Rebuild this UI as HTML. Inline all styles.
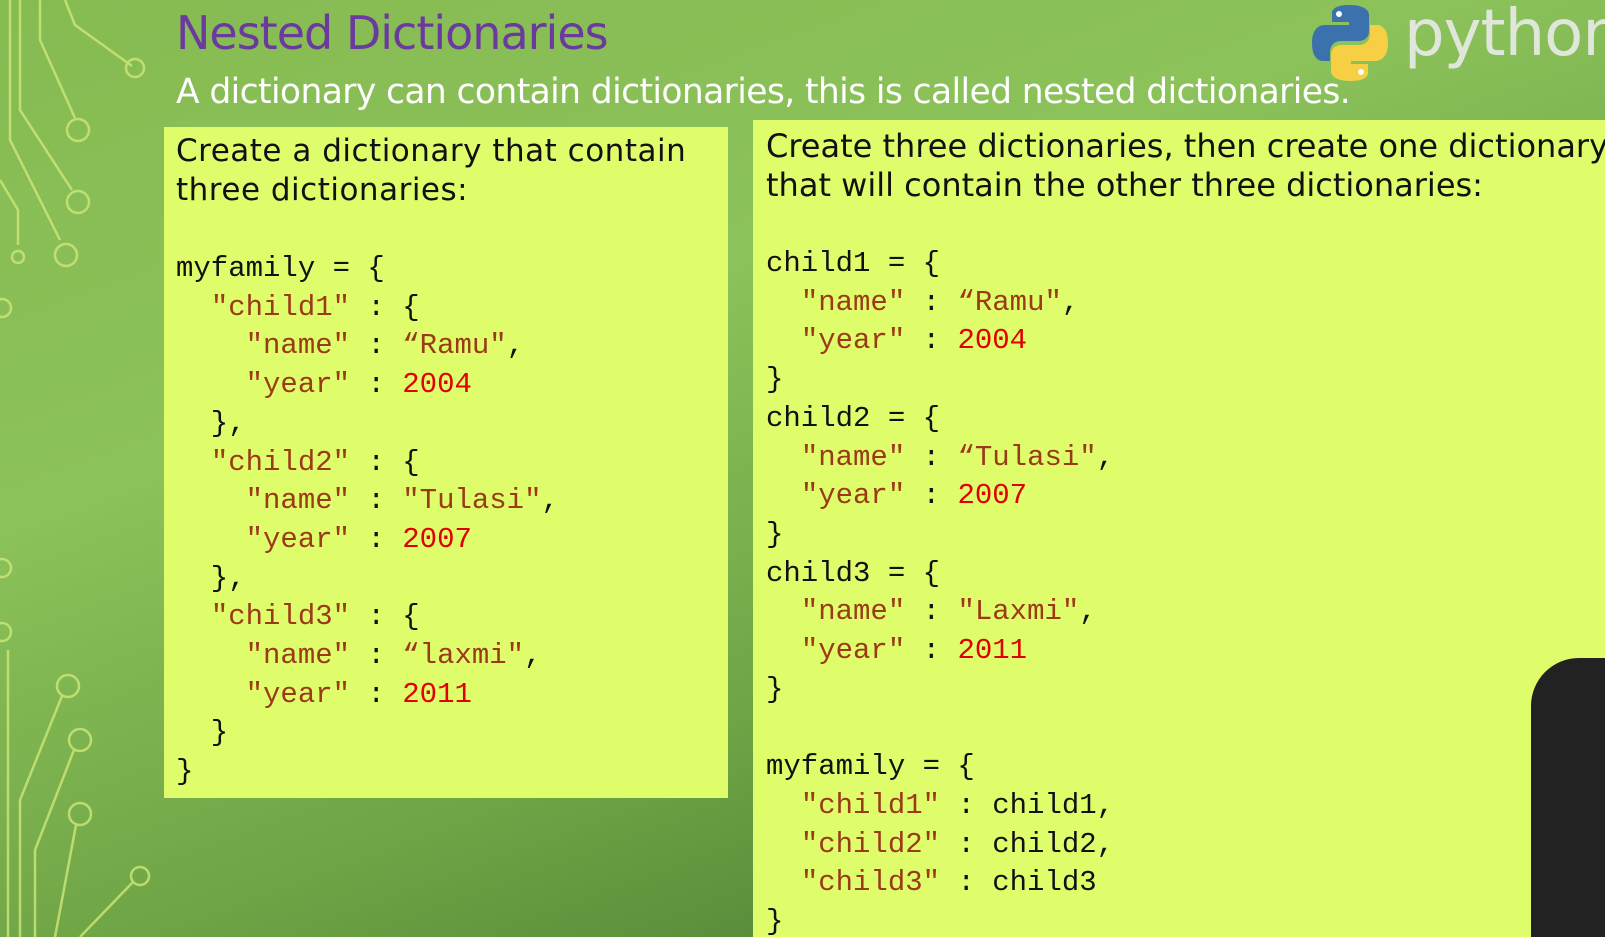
<!DOCTYPE html>
<html><head><meta charset="utf-8"><style>
html,body{margin:0;padding:0;width:1605px;height:937px;overflow:hidden;background:#5f9538}
body{position:relative;
background:linear-gradient(160deg,#86bb52 0%,#8cc25a 35%,#6ea445 65%,#3f6f2c 100%);
font-family:"Liberation Sans",sans-serif}
.t{position:absolute;white-space:pre;line-height:1}
.title{left:176px;top:10px;font-size:46px;color:#6b3a9e;font-family:"DejaVu Sans","Liberation Sans",sans-serif;letter-spacing:-1px}
.sub{left:176px;top:75px;font-size:34.5px;color:#fff;font-family:"DejaVu Sans","Liberation Sans",sans-serif;letter-spacing:-0.6px}
.panel{position:absolute;background:#dffc6a}
.code{position:absolute;font-family:"Liberation Mono",monospace;font-size:29px;line-height:38.7px;white-space:pre;color:#111}
.hd{position:absolute;font-size:31px;line-height:39px;white-space:pre;color:#111;font-family:"DejaVu Sans",sans-serif}
.s{color:#9a3a16}.n{color:#e00000}
</style></head><body>
<svg width="170" height="937" style="position:absolute;left:0;top:0" fill="none" stroke="#cfe878" stroke-width="2.5" opacity=".8">
<path d="M65 0 L75 25 L132 66"/><circle cx="135" cy="68" r="9"/>
<path d="M40 0 L40 40 L75 118"/><circle cx="78" cy="130" r="11"/>
<path d="M20 0 L20 110 L72 190"/><circle cx="78" cy="202" r="11"/>
<path d="M10 0 L10 140 L60 240"/><circle cx="66" cy="255" r="11"/>
<path d="M0 180 L18 210 L18 245"/><circle cx="18" cy="257" r="6"/>
<circle cx="2" cy="308" r="9"/>
<circle cx="2" cy="568" r="9"/><circle cx="2" cy="632" r="9"/>
<circle cx="68" cy="686" r="11"/><path d="M62 696 L20 800 L20 937"/>
<circle cx="80" cy="740" r="11"/><path d="M74 750 L35 850 L35 937"/>
<circle cx="80" cy="814" r="11"/><path d="M76 825 L55 937"/>
<circle cx="140" cy="876" r="9"/><path d="M133 882 L80 937"/>
<path d="M8 650 L8 937"/>
</svg>
<div class="t title">Nested Dictionaries</div>
<div class="t sub">A dictionary can contain dictionaries, this is called nested dictionaries.</div>
<svg width="80" height="80" viewBox="0 0 80 80" style="position:absolute;left:1310px;top:3px">
<path d="M39 2c-18 0-17 8-17 8v9h17v3H15S2 21 2 40s11 18 11 18h7v-9s0-11 11-11h18s10 0 10-10V12S60 2 39 2z" fill="#3b72ad"/>
<circle cx="29" cy="11" r="3" fill="#fff"/>
<path d="M41 78c18 0 17-8 17-8v-9H41v-3h24s13 1 13-18-11-18-11-18h-7v9s0 11-11 11H31s-10 0-10 10v16s-1 10 20 10z" fill="#f7cf45"/>
<circle cx="51" cy="69" r="3" fill="#fff"/>
</svg>
<div class="t" style="left:1404px;top:2px;font-size:64px;color:#dfe6da;font-family:'DejaVu Sans',sans-serif;letter-spacing:-1px">python</div>
<div class="panel" style="left:164px;top:127px;width:564px;height:671px"></div>
<div class="panel" style="left:753px;top:120px;width:852px;height:830px"></div>
<div class="hd" style="left:176px;top:132px;letter-spacing:0.5px">Create a dictionary that contain
three dictionaries:</div>
<div class="code" style="left:176px;top:250px">myfamily = {
  <span class="s">"child1"</span> : {
    <span class="s">"name"</span> : <span class="s">“Ramu"</span>,
    <span class="s">"year"</span> : <span class="n">2004</span>
  },
  <span class="s">"child2"</span> : {
    <span class="s">"name"</span> : <span class="s">"Tulasi"</span>,
    <span class="s">"year"</span> : <span class="n">2007</span>
  },
  <span class="s">"child3"</span> : {
    <span class="s">"name"</span> : <span class="s">“laxmi"</span>,
    <span class="s">"year"</span> : <span class="n">2011</span>
  }
}</div>
<div class="hd" style="left:766px;top:127px;font-size:32px">Create three dictionaries, then create one dictionary
that will contain the other three dictionaries:</div>
<div class="code" style="left:766px;top:245px">child1 = {
  <span class="s">"name"</span> : <span class="s">“Ramu"</span>,
  <span class="s">"year"</span> : <span class="n">2004</span>
}
child2 = {
  <span class="s">"name"</span> : <span class="s">“Tulasi"</span>,
  <span class="s">"year"</span> : <span class="n">2007</span>
}
child3 = {
  <span class="s">"name"</span> : <span class="s">"Laxmi"</span>,
  <span class="s">"year"</span> : <span class="n">2011</span>
}

myfamily = {
  <span class="s">"child1"</span> : child1,
  <span class="s">"child2"</span> : child2,
  <span class="s">"child3"</span> : child3
}</div>
<div style="position:absolute;left:1531px;top:658px;width:90px;height:300px;background:#222;border-radius:48px 0 0 0"></div>
</body></html>
